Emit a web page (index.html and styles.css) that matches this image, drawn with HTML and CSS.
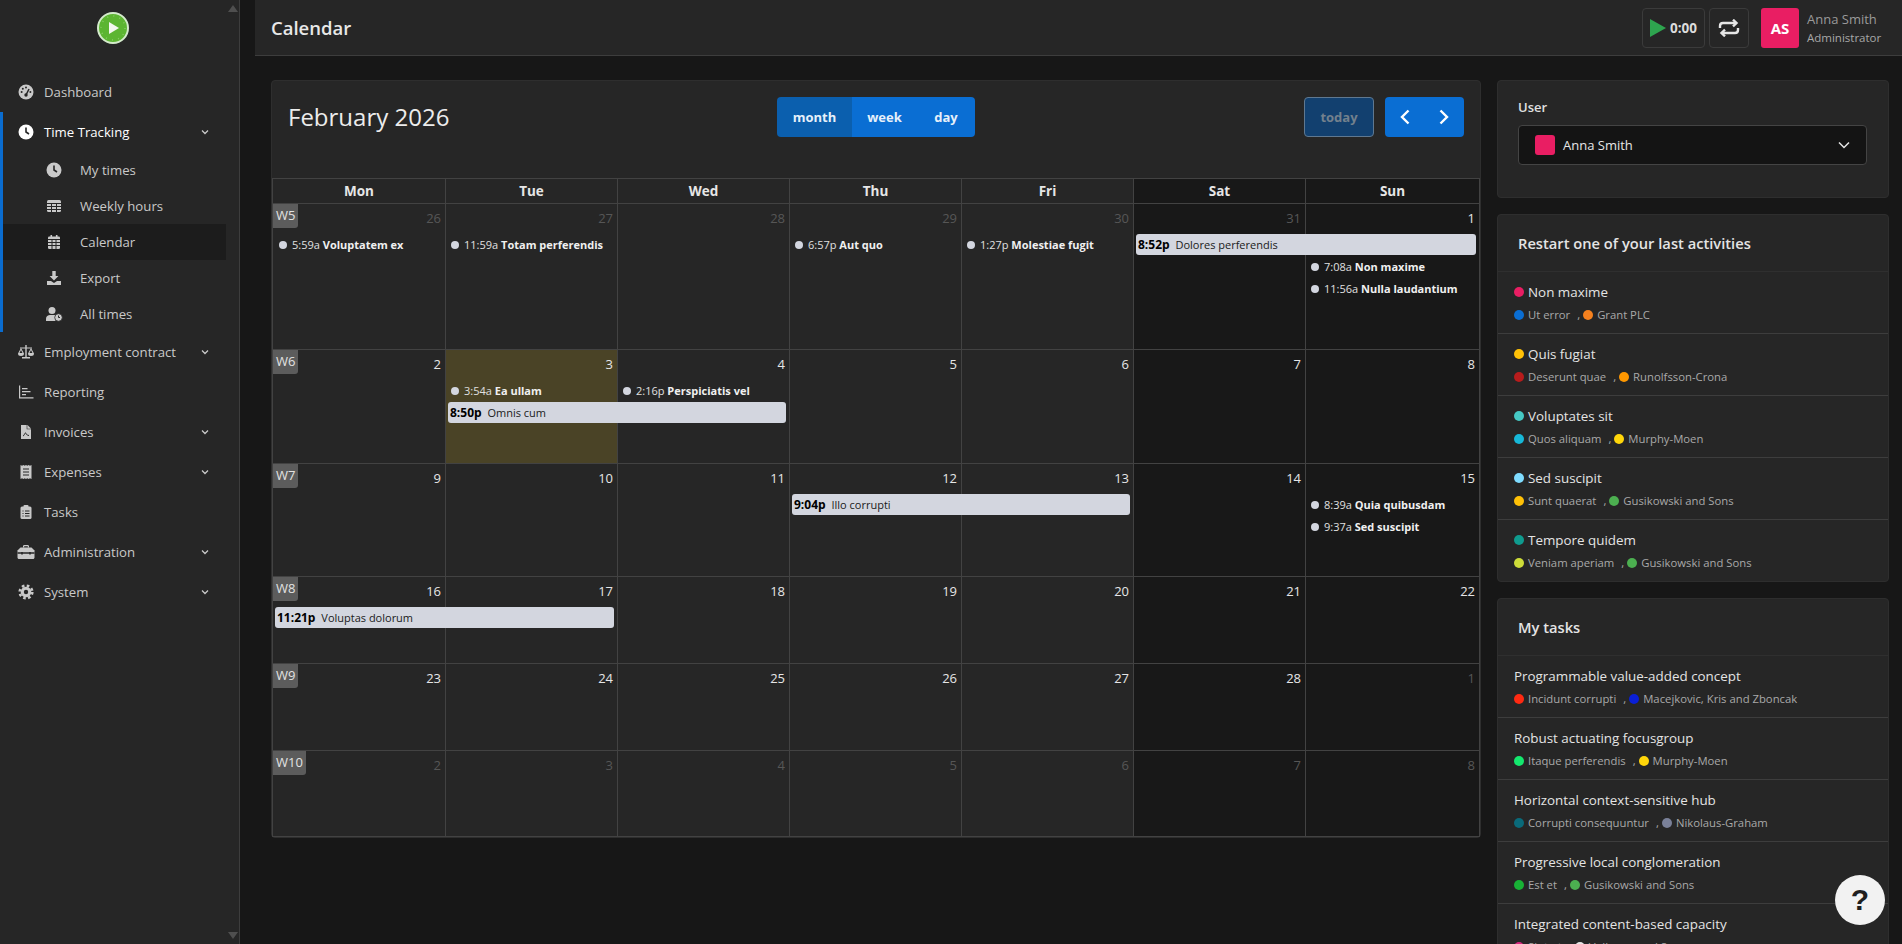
FILE: index.html
```html
<!DOCTYPE html>
<html lang="en">
  <head>
    <meta charset="UTF-8" />
    <meta name="viewport" content="width=device-width, initial-scale=1.0" />
    <title>Calendar</title>
    <link rel="stylesheet" href="styles.css">
  </head>
  <body>
    <svg class="defs" width="0" height="0">
      <symbol id="chev" viewBox="0 0 10 10"><path d="M2 3.5 5 6.5 8 3.5" fill="none" stroke="currentColor" stroke-width="1.3" /></symbol>
    </svg>

    <aside class="sidebar">
      <span class="scroll-up"></span>
      <span class="scroll-down"></span>
      <div class="logo">
        <svg viewBox="0 0 32 32" width="32" height="32"><circle cx="16" cy="16" r="15" fill="#5cb531" stroke="#d4ebcb" stroke-width="2" /><circle cx="16" cy="16" r="12" fill="none" stroke="#86cc63" stroke-width="1.500" stroke-dasharray="1 5.280" /><path d="M12 10l10 6-10 6z" fill="#f3f7ee" /></svg>
      </div>
      <nav>
        <a class="nav-item">
          <svg class="ico" viewBox="0 0 16 16"><circle cx="8" cy="8" r="7.5" /><circle class="cut" cx="8" cy="3.6" r="1" /><circle class="cut" cx="3.6" cy="8" r="1" /><circle class="cut" cx="12.4" cy="8" r="1" /><circle class="cut" cx="4.8" cy="4.8" r="1" /><circle class="cut" cx="8" cy="11" r="1.7" /><path class="cut-line" d="M8 11l3-6" /></svg>
          <span>Dashboard</span>
        </a>
        <div class="nav-group">
          <a class="nav-item active">
            <svg class="ico" viewBox="0 0 16 16"><circle cx="8" cy="8" r="7.5" /><path class="cut-line" d="M8 3.5V8l3 2" /></svg>
            <span>Time Tracking</span>
            <svg class="chev"><use href="#chev" /></svg>
          </a>
          <a class="nav-sub">
            <svg class="ico" viewBox="0 0 16 16"><circle cx="8" cy="8" r="7.5" /><path class="cut-line" d="M8 3.5V8l3 2" /></svg>
            <span>My times</span>
          </a>
          <a class="nav-sub">
            <svg class="ico" viewBox="0 0 16 16"><rect x="1" y="2" width="14" height="12" rx="1.5" /><path class="cut-line thin" d="M1 5.5h14M1 8.5h14M1 11.5h14M5.5 5v9M10.5 5v9" /></svg>
            <span>Weekly hours</span>
          </a>
          <a class="nav-sub current">
            <svg class="ico" viewBox="0 0 16 16"><rect x="2" y="2.5" width="12" height="12.5" rx="1.3" /><path d="M4.5 1h1.6v3H4.500zM9.900 1h1.600v3H9.900z" /><path class="cut-line thin" d="M2 5.500h12M2 8.500h12M2 11.500h12M6 6v9M10 6v9" /></svg>
            <span>Calendar</span>
          </a>
          <a class="nav-sub">
            <svg class="ico" viewBox="0 0 16 16"><path d="M6.300 1h3.400v5h2.700L8 10.500 3.600 6h2.700z" /><path d="M1 11h4l3 2 3-2h4v4H1z" /></svg>
            <span>Export</span>
          </a>
          <a class="nav-sub">
            <svg class="ico wide" viewBox="0 0 18 16"><circle cx="7" cy="4.500" r="3.500" /><path d="M1 15v-2.500C1 10.500 3 9 5 9h4c1 0 1.500.5 1.500.5V15z" /><circle cx="13.500" cy="11.500" r="3.800" stroke="#262626" stroke-width=".8" /><path class="cut-line thin" d="M13.500 9.500v2h1.500" /></svg>
            <span>All times</span>
          </a>
        </div>
        <a class="nav-item">
          <svg class="ico wide" viewBox="0 0 18 16"><path d="M8.300 1h1.400v12H13v1.500H5V13h3.300z" /><path d="M3 3.500h12v1H3z" /><path d="M4 4 1 9.500a3 2.500 0 0 0 6 0zM4 6 2.500 9h3zM14 4l-3 5.500a3 2.500 0 0 0 6 0zM14 6l-1.500 3h3z" fill-rule="evenodd" /></svg>
          <span>Employment contract</span>
          <svg class="chev"><use href="#chev" /></svg>
        </a>
        <a class="nav-item">
          <svg class="ico" viewBox="0 0 16 16"><path d="M1 1.500h1.200V13.300H15.500v1.200H1z" /><path d="M4 4h5.500v1.200H4zM4 7h8.500v1.200H4zM4 10h4v1.200H4z" /></svg>
          <span>Reporting</span>
        </a>
        <a class="nav-item">
          <svg class="ico" viewBox="0 0 16 16"><path d="M3 1h6.500L13 4.500V15H3z" /><path class="cut" d="M9.300 1v3.700H13v.6H8.700V1z" /><path class="cut-line thin" d="M5 12c1.500-.5 1.500-3 2.500-3s.5 2.500 3.500 2.500" /></svg>
          <span>Invoices</span>
          <svg class="chev"><use href="#chev" /></svg>
        </a>
        <a class="nav-item">
          <svg class="ico" viewBox="0 0 16 16"><path d="M2.500 1l1.500.8L5.500 1l1.200.8L8 1l1.300.8L10.500 1l1.500.8L13.500 1v14l-1.500-.8-1.500.8-1.200-.8L8 15l-1.300-.8-1.200.8-1.500-.8-1.500.8z" /><path class="cut-line thin" d="M5 5h6M5 8h6M5 11h6" /></svg>
          <span>Expenses</span>
          <svg class="chev"><use href="#chev" /></svg>
        </a>
        <a class="nav-item">
          <svg class="ico" viewBox="0 0 16 16"><rect x="2.500" y="2.500" width="11" height="12.500" rx="1.500" /><rect x="5.500" y="1" width="5" height="3" rx="1" /><path class="cut-line thin" d="M7 7h4.500M7 9.500h4.500M7 12h4.500M4.500 7h1M4.500 9.500h1M4.500 12h1" /></svg>
          <span>Tasks</span>
        </a>
        <a class="nav-item">
          <svg class="ico wide" viewBox="0 0 18 16"><path d="M6 3.500V2.300C6 1.600 6.600 1 7.300 1h3.400c.7 0 1.300.6 1.300 1.300v1.200h-1.200V2.300h-3.600v1.200z" /><path d="M3.500 3.500h11l3 3v7c0 .8-.6 1.500-1.500 1.500H2c-.9 0-1.500-.7-1.500-1.500v-7z" /><path class="cut-line" d="M.5 9h17M5 8v2.500M13 8v2.500" /></svg>
          <span>Administration</span>
          <svg class="chev"><use href="#chev" /></svg>
        </a>
        <a class="nav-item">
          <svg class="ico" viewBox="0 0 16 16"><circle cx="8" cy="8" r="5.300" /><circle cx="8" cy="8" r="6.300" fill="none" stroke="currentColor" stroke-width="2.600" stroke-dasharray="2.600 2.350" /><circle class="cut" cx="8" cy="8" r="2.200" /></svg>
          <span>System</span>
          <svg class="chev"><use href="#chev" /></svg>
        </a>
      </nav>
    </aside>

    <div class="main">
      <header class="topbar">
        <h1>Calendar</h1>
        <div class="topbar-right">
          <button class="top-btn play-btn">
            <svg viewBox="0 0 16 18" width="16" height="18"><path d="M0 0l16 9-16 9z" fill="#2ea44f" /></svg>
            <b>0:00</b>
          </button>
          <button class="top-btn repeat-btn">
            <svg viewBox="0 0 22 18" width="22" height="18" fill="none" stroke="#e6e6e6" stroke-width="2.400"><path d="M2 9V7c0-1.700 1.300-3 3-3h12" /><path d="M20 9v2c0 1.700-1.300 3-3 3H5" /><path d="M15 .7 18.500 4 15 7.300M7 10.700 3.500 14 7 17.300" /></svg>
          </button>
          <div class="avatar">AS</div>
          <div class="user-info">
            <div class="user-name">Anna Smith</div>
            <div class="user-role">Administrator</div>
          </div>
        </div>
      </header>

      <div class="content">
        <section class="card calendar">
          <div class="toolbar">
            <h2>February 2026</h2>
            <div class="btn-group views">
              <button class="btn selected">month</button>
              <button class="btn">week</button>
              <button class="btn">day</button>
            </div>
            <div class="toolbar-right">
              <button class="btn today">today</button>
              <div class="btn-group">
                <button class="btn arrow"><svg viewBox="0 0 14 18" width="14" height="18" fill="none" stroke="#fff" stroke-width="2.400"><path d="M10.500 2.500 4 9l6.500 6.500" /></svg></button>
                <button class="btn arrow"><svg viewBox="0 0 14 18" width="14" height="18" fill="none" stroke="#fff" stroke-width="2.400"><path d="M3.500 2.500 10 9l-6.500 6.500" /></svg></button>
              </div>
            </div>
          </div>

          <div class="month">
            <div class="day-heads">
              <div>Mon</div><div>Tue</div><div>Wed</div><div>Thu</div><div>Fri</div><div class="weekend">Sat</div><div class="weekend">Sun</div>
            </div>

            <div class="week h146">
              <span class="week-no">W5</span>
              <div class="day c1 other">26</div><div class="day c2 other">27</div><div class="day c3 other">28</div><div class="day c4 other">29</div><div class="day c5 other">30</div><div class="day c6 weekend other">31</div><div class="day c7 weekend">1</div>
              <div class="ev c1 r2"><i></i>5:59a <b>Voluptatem ex</b></div>
              <div class="ev c2 r2"><i></i>11:59a <b>Totam perferendis</b></div>
              <div class="ev c4 r2"><i></i>6:57p <b>Aut quo</b></div>
              <div class="ev c5 r2"><i></i>1:27p <b>Molestiae fugit</b></div>
              <div class="bar c6 s2 r2"><b>8:52p</b> Dolores perferendis</div>
              <div class="ev c7 r3"><i></i>7:08a <b>Non maxime</b></div>
              <div class="ev c7 r4"><i></i>11:56a <b>Nulla laudantium</b></div>
            </div>

            <div class="week h114">
              <span class="week-no">W6</span>
              <div class="day c1">2</div><div class="day c2 today-cell">3</div><div class="day c3">4</div><div class="day c4">5</div><div class="day c5">6</div><div class="day c6 weekend">7</div><div class="day c7 weekend">8</div>
              <div class="ev c2 r2"><i></i>3:54a <b>Ea ullam</b></div>
              <div class="ev c3 r2"><i></i>2:16p <b>Perspiciatis vel</b></div>
              <div class="bar c2 s2 r3"><b>8:50p</b> Omnis cum</div>
            </div>

            <div class="week h113">
              <span class="week-no">W7</span>
              <div class="day c1">9</div><div class="day c2">10</div><div class="day c3">11</div><div class="day c4">12</div><div class="day c5">13</div><div class="day c6 weekend">14</div><div class="day c7 weekend">15</div>
              <div class="bar c4 s2 r2"><b>9:04p</b> Illo corrupti</div>
              <div class="ev c7 r2"><i></i>8:39a <b>Quia quibusdam</b></div>
              <div class="ev c7 r3"><i></i>9:37a <b>Sed suscipit</b></div>
            </div>

            <div class="week h87">
              <span class="week-no">W8</span>
              <div class="day c1">16</div><div class="day c2">17</div><div class="day c3">18</div><div class="day c4">19</div><div class="day c5">20</div><div class="day c6 weekend">21</div><div class="day c7 weekend">22</div>
              <div class="bar c1 s2 r2"><b>11:21p</b> Voluptas dolorum</div>
            </div>

            <div class="week h87">
              <span class="week-no">W9</span>
              <div class="day c1">23</div><div class="day c2">24</div><div class="day c3">25</div><div class="day c4">26</div><div class="day c5">27</div><div class="day c6 weekend">28</div><div class="day c7 weekend other">1</div>
            </div>

            <div class="week h86">
              <span class="week-no">W10</span>
              <div class="day c1 other">2</div><div class="day c2 other">3</div><div class="day c3 other">4</div><div class="day c4 other">5</div><div class="day c5 other">6</div><div class="day c6 weekend other">7</div><div class="day c7 weekend other">8</div>
            </div>
          </div>
        </section>

        <aside class="side">
          <section class="card user-card">
            <label>User</label>
            <div class="select">
              <span class="swatch"></span>
              <span>Anna Smith</span>
              <svg viewBox="0 0 14 14" width="14" height="14" fill="none" stroke="#e6e6e6" stroke-width="1.500"><path d="M2 4.500 7 9.500 12 4.500" /></svg>
            </div>
          </section>

          <section class="card">
            <h3>Restart one of your last activities</h3>
            <div class="item">
              <div class="item-title"><i class="dot pink"></i>Non maxime</div>
              <div class="item-sub"><i class="dot blue"></i>Ut error<span class="comma">,</span><i class="dot orange"></i>Grant PLC</div>
            </div>
            <div class="item">
              <div class="item-title"><i class="dot amber"></i>Quis fugiat</div>
              <div class="item-sub"><i class="dot darkred"></i>Deserunt quae<span class="comma">,</span><i class="dot orange2"></i>Runolfsson-Crona</div>
            </div>
            <div class="item">
              <div class="item-title"><i class="dot turq"></i>Voluptates sit</div>
              <div class="item-sub"><i class="dot cyan"></i>Quos aliquam<span class="comma">,</span><i class="dot yellow"></i>Murphy-Moen</div>
            </div>
            <div class="item">
              <div class="item-title"><i class="dot sky"></i>Sed suscipit</div>
              <div class="item-sub"><i class="dot amber"></i>Sunt quaerat<span class="comma">,</span><i class="dot green"></i>Gusikowski and Sons</div>
            </div>
            <div class="item">
              <div class="item-title"><i class="dot teal"></i>Tempore quidem</div>
              <div class="item-sub"><i class="dot lime"></i>Veniam aperiam<span class="comma">,</span><i class="dot green"></i>Gusikowski and Sons</div>
            </div>
          </section>

          <section class="card">
            <h3>My tasks</h3>
            <div class="item">
              <div class="item-title">Programmable value-added concept</div>
              <div class="item-sub"><i class="dot red"></i>Incidunt corrupti<span class="comma">,</span><i class="dot navy"></i>Macejkovic, Kris and Zboncak</div>
            </div>
            <div class="item">
              <div class="item-title">Robust actuating focusgroup</div>
              <div class="item-sub"><i class="dot mint"></i>Itaque perferendis<span class="comma">,</span><i class="dot yellow"></i>Murphy-Moen</div>
            </div>
            <div class="item">
              <div class="item-title">Horizontal context-sensitive hub</div>
              <div class="item-sub"><i class="dot petrol"></i>Corrupti consequuntur<span class="comma">,</span><i class="dot slate"></i>Nikolaus-Graham</div>
            </div>
            <div class="item">
              <div class="item-title">Progressive local conglomeration</div>
              <div class="item-sub"><i class="dot green2"></i>Est et<span class="comma">,</span><i class="dot green"></i>Gusikowski and Sons</div>
            </div>
            <div class="item">
              <div class="item-title">Integrated content-based capacity</div>
              <div class="item-sub"><i class="dot magenta"></i>Sint ut<span class="comma">,</span><i class="dot white"></i>Volkman and Sons</div>
            </div>
          </section>
        </aside>
      </div>
    </div>

    <button class="help">?</button>
  </body>
</html>
```

FILE: styles.css
```css
* {
  box-sizing: border-box;
}

html,
body {
  height: 100%;
}

body {
  margin: 0;
  display: flex;
  overflow: hidden;
  background: #171717;
  color: #e6e6e6;
  font-family: "Open Sans", "Noto Sans", sans-serif;
  font-size: 13px;
}

.defs {
  position: absolute;
}

button {
  font-family: inherit;
  cursor: pointer;
}

/* sidebar */
.sidebar {
  position: relative;
  flex: 0 0 240px;
  height: 100%;
  background: #262626;
  border-right: 1px solid #3d3d3d;
}

.scroll-up,
.scroll-down {
  position: absolute;
  left: 228px;
  border-left: 5px solid transparent;
  border-right: 5px solid transparent;
}

.scroll-up {
  top: 5px;
  border-bottom: 7px solid #4f4f4f;
}

.scroll-down {
  bottom: 5px;
  border-top: 7px solid #4f4f4f;
}

.logo {
  height: 72px;
  width: 226px;
  padding-top: 12px;
  display: flex;
  justify-content: center;
}

nav {
  width: 226px;
}

.nav-item,
.nav-sub {
  display: flex;
  align-items: center;
  font-size: 13.200px;
  color: #c9c9c9;
}

.nav-item {
  height: 40px;
  padding: 0 16px 0 18px;
  gap: 10px;
}

.nav-item.active {
  color: #fff;
  padding-left: 15px;
}

.nav-sub {
  height: 36px;
  padding-left: 43px;
  gap: 18px;
  color: #c9c9c9;
}

.nav-group {
  border-left: 3px solid #0a6ccf;
}

.nav-sub.current {
  background: #1c1c1c;
}

.ico {
  flex: none;
  width: 16px;
  height: 16px;
  fill: currentColor;
}

.ico.wide {
  width: 18px;
  margin: 0 -1px;
}

.cut {
  fill: #262626;
}

.cut-line {
  fill: none;
  stroke: #262626;
  stroke-width: 1.6;
}

.cut-line.thin {
  stroke-width: 1;
}

.chev {
  flex: none;
  width: 10px;
  height: 10px;
  margin-left: auto;
  color: #c9c9c9;
}

/* top bar */
.main {
  flex: 1;
  min-width: 0;
  padding-left: 15px;
}

.topbar {
  height: 56px;
  display: flex;
  align-items: center;
  justify-content: space-between;
  padding: 0 13px 0 16px;
  background: #262626;
  border-bottom: 1px solid #3d3d3d;
}

h1 {
  margin: 0;
  font-size: 18.500px;
  font-weight: 600;
  color: #e8e8e8;
}

.topbar-right {
  display: flex;
  align-items: center;
  height: 40px;
}

.top-btn {
  height: 40px;
  display: flex;
  align-items: center;
  justify-content: center;
  background: #262626;
  border: 1px solid #3b3b3b;
  border-radius: 4px;
  color: #dcdcdc;
  padding: 0;
}

.play-btn {
  width: 63px;
  gap: 4px;
  font-size: 13.500px;
}

.repeat-btn {
  width: 40px;
  margin-left: 4px;
}

.avatar {
  width: 38px;
  height: 40px;
  margin-left: 12px;
  display: flex;
  align-items: center;
  justify-content: center;
  background: #e91e63;
  border-radius: 3px;
  color: #fff;
  font-size: 15px;
  font-weight: 700;
}

.user-info {
  margin-left: 8px;
  width: 82px;
}

.user-name {
  font-size: 13px;
  line-height: 19px;
  color: #9a9a9a;
}

.user-role {
  font-size: 11.500px;
  line-height: 17px;
  color: #a8a8a8;
}

/* page content */
.content {
  display: flex;
  gap: 16px;
  padding: 24px 13px 0 16px;
}

.card {
  background: #262626;
  border: 1px solid #2e2e2e;
  border-radius: 4px;
}

.calendar {
  flex: 1;
  min-width: 0;
  height: 758px;
}

.toolbar {
  height: 97px;
  display: grid;
  grid-template-columns: 1fr auto 1fr;
  align-items: start;
  padding: 16px 16px 0 16px;
}

h2 {
  margin: 0;
  font-size: 24px;
  line-height: 40px;
  font-weight: 500;
  color: #ececec;
}

.btn-group {
  display: flex;
  border-radius: 4px;
  overflow: hidden;
}

.btn {
  height: 40px;
  border: 0;
  background: #0a6ed3;
  color: #e6f0fa;
  font-size: 13px;
  font-weight: 700;
  padding: 0;
}

.views .btn {
  width: 65px;
}

.views .btn:last-child {
  width: 58px;
}

.views .selected {
  width: 75px;
  background: #0b5fae;
}

.toolbar-right {
  display: flex;
  justify-content: flex-end;
  gap: 11px;
}

.btn.today {
  width: 70px;
  background: #12406f;
  border: 1px solid #5f7890;
  border-radius: 4px;
  color: #73808d;
}

.btn.arrow {
  width: 39.500px;
  display: flex;
  align-items: center;
  justify-content: center;
}

/* month table */
.month {
  border: 1px solid #424242;
  border-bottom: 0;
}

.day-heads {
  display: grid;
  grid-template-columns: repeat(6, 172px) 1fr;
  height: 25px;
  border-bottom: 1px solid #424242;
}

.day-heads div {
  text-align: center;
  font-size: 13.500px;
  font-weight: 700;
  line-height: 24px;
  border-left: 1px solid #424242;
}

.day-heads div:first-child {
  border-left: 0;
}

.day-heads .weekend {
  background: #181818;
}

.week {
  position: relative;
  display: grid;
  grid-template-columns: repeat(6, 172px) 1fr;
  grid-template-rows: 30px 22px 1fr;
  border-bottom: 1px solid #424242;
}

.h146,
.h114,
.h113 {
  grid-template-rows: 30px 22px 22px 22px 1fr;
}

.h146 { height: 146px; }
.h114 { height: 114px; }
.h113 { height: 113px; }
.h87 { height: 87px; }
.h86 { height: 86px; }

.week-no {
  position: absolute;
  left: 0;
  top: 0;
  z-index: 1;
  height: 24px;
  padding: 0 3px;
  background: #5c5c5c;
  border-radius: 0 0 3px 0;
  color: #e2e2e2;
  font-size: 13px;
  line-height: 22px;
}

.day {
  grid-row: 1 / -1;
  padding: 4px 4px 0 0;
  text-align: right;
  line-height: 20px;
  color: #e6e6e6;
  border-left: 1px solid #424242;
}

.day.c1 {
  border-left: 0;
}

.day.weekend {
  background: #181818;
}

.day.other {
  color: #565656;
}

.day.today-cell {
  background: #4a4326;
}

.c1 { grid-column-start: 1; }
.c2 { grid-column-start: 2; }
.c3 { grid-column-start: 3; }
.c4 { grid-column-start: 4; }
.c5 { grid-column-start: 5; }
.c6 { grid-column-start: 6; }
.c7 { grid-column-start: 7; }
.s2 { grid-column-end: span 2; }
.r2 { grid-row-start: 2; }
.r3 { grid-row-start: 3; }
.r4 { grid-row-start: 4; }

.ev {
  font-size: 11px;
  line-height: 22px;
  padding-left: 6px;
  white-space: nowrap;
  overflow: hidden;
  color: #e0e0e0;
}

.ev i {
  display: inline-block;
  width: 8px;
  height: 8px;
  margin-right: 5px;
  border-radius: 50%;
  background: #d3d6df;
}

.ev b {
  color: #f0f0f0;
}

.bar {
  height: 21px;
  margin: 0 3px 0 3px;
  padding-left: 2px;
  background: #d3d6df;
  border-radius: 3px;
  color: #1a1a1a;
  font-size: 11px;
  line-height: 21px;
}

.bar.c1 {
  margin-left: 2px;
}

.bar b {
  font-size: 12px;
  color: #000;
  margin-right: 3px;
}

/* right column */
.side {
  flex: 0 0 392px;
  display: flex;
  flex-direction: column;
  gap: 16px;
}

.user-card {
  height: 118px;
  padding: 17px 21px 0 20px;
}

label {
  display: block;
  font-weight: 600;
  line-height: 18px;
  color: #e0e0e0;
}

.select {
  height: 40px;
  margin-top: 9px;
  display: flex;
  align-items: center;
  gap: 8px;
  padding: 0 15px 0 16px;
  background: #141414;
  border: 1px solid #444;
  border-radius: 4px;
}

.select svg {
  margin-left: auto;
}

.swatch {
  width: 20px;
  height: 20px;
  background: #e91e63;
  border-radius: 3px;
}

h3 {
  margin: 0;
  height: 57px;
  padding-left: 20px;
  font-size: 14.700px;
  font-weight: 600;
  line-height: 56px;
  color: #e4e4e4;
  border-bottom: 1px solid #2f2f2f;
}

.item {
  height: 62px;
  padding: 10px 0 0 16px;
  border-bottom: 1px solid #3d3d3d;
}

.item:last-child {
  height: 61px;
  border-bottom: 0;
}

.item-title {
  display: flex;
  align-items: center;
  font-size: 13.400px;
  line-height: 20px;
  color: #e4e4e4;
}

.item-sub {
  display: flex;
  align-items: center;
  margin-top: 3px;
  font-size: 11.300px;
  line-height: 20px;
  color: #a9a9a9;
}

.comma {
  margin: 0 3px 0 7px;
}

.dot {
  flex: none;
  width: 10px;
  height: 10px;
  margin-right: 4px;
  border-radius: 50%;
}

.pink { background: #e91e63; }
.blue { background: #0a6ed3; }
.orange { background: #f5811f; }
.orange2 { background: #ff9800; }
.amber { background: #ffc107; }
.darkred { background: #b71c1c; }
.turq { background: #46c9c4; }
.cyan { background: #17b8d8; }
.yellow { background: #ffd60a; }
.sky { background: #7fdcff; }
.green { background: #4caf50; }
.green2 { background: #18b236; }
.teal { background: #0f9b8e; }
.lime { background: #cddc39; }
.red { background: #ff2a12; }
.navy { background: #0a1fd6; }
.mint { background: #14e86e; }
.petrol { background: #0a6a7a; }
.slate { background: #7a8199; }
.magenta { background: #d6287f; }
.white { background: #e6e6e6; }

.help {
  position: absolute;
  left: 1835px;
  top: 875px;
  width: 50px;
  height: 50px;
  padding: 0;
  border: 0;
  border-radius: 50%;
  background: #f2f2f2;
  color: #1f1f1f;
  font-family: "Liberation Sans", sans-serif;
  font-size: 30px;
  font-weight: 700;
}
```
